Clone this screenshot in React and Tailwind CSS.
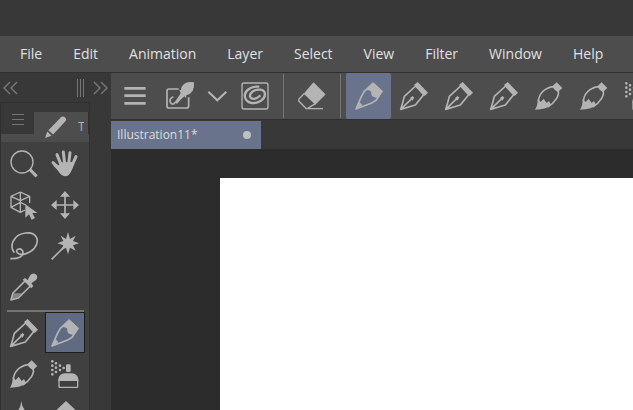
import clsx from 'clsx';

const MENUS = ['File', 'Edit', 'Animation', 'Layer', 'Select', 'View', 'Filter', 'Window', 'Help'];

// every tool glyph is drawn on the same 84 unit grid
const Glyph = ({ className = 'size-7', children }) => (
  <svg
    viewBox="0 0 84 84"
    className={clsx('shrink-0 overflow-visible', className)}
    fill="none"
    stroke="currentColor"
    strokeWidth="5"
    strokeLinejoin="round"
    aria-hidden="true"
  >
    {children}
  </svg>
);

const MenuIcon = () => (
  <Glyph>
    <path d="M10 19h64M10 41h64M10 64h64" strokeWidth="8" />
  </Glyph>
);

const CustomBrushIcon = () => (
  <Glyph>
    <path d="M38 21H9q-6 0-6 6v44q0 7 6 7h52q7 0 7-7V46" />
    <path d="M22 44Q11 48 12 58Q15 69 24 65Q30 60 35 52L48 36" strokeWidth="5" />
    <path
      d="M84 1Q58-3 48 13Q44 20 45 24L40 24L44 33Q36 48 28 61L33 66Q42 54 55 43L60 48L61 40Q87 34 84 1z"
      fill="currentColor"
      stroke="none"
    />
  </Glyph>
);

const ChevronIcon = () => (
  <Glyph>
    <path d="M16 29l27 26l27-26" strokeWidth="6" strokeLinejoin="miter" />
  </Glyph>
);

const ClipIcon = () => (
  <Glyph>
    <rect x="3" y="3" width="78" height="78" rx="6" strokeWidth="4" />
    <path
      d="M52 14C26 12 8 30 12 46C18 68 44 66 60 56C77 44 75 25 58 23C40 21 25 33 27 44C31 54 46 52 56 42"
      strokeWidth="7"
      strokeLinecap="round"
    />
  </Glyph>
);

const EraserIcon = () => (
  <Glyph>
    <path d="M17 35L45 2q2-1 4 1l32 32q2 2 0 4L52 68z" fill="currentColor" stroke="none" />
    <path d="M19 34L3 51q-2 3 0 7l22 22h50M28 80L52 65" strokeWidth="4" />
  </Glyph>
);

const MappingPenIcon = () => (
  <Glyph>
    <path d="M3 81L19 44L28 28L54 4L80 28L64 54L52 62z" />
    <path
      d="M54 1L84 28L72 45Q66 49 56 45Q47 41 49 30Q46 24 34 24Z"
      fill="currentColor"
      stroke="none"
    />
    <path d="M2 83L22 70L14 60z" fill="currentColor" stroke="none" />
  </Glyph>
);

const NibPenIcon = () => (
  <Glyph>
    <path d="M2 82Q8 64 13 43L47 12L71 38L46 69Q22 76 2 82zL36 49" />
    <path d="M30 48L38 42L43 47L37 56z" fill="currentColor" stroke="none" />
    <path d="M42 9L53 0L84 32L74 42z" fill="currentColor" stroke="none" />
  </Glyph>
);

const BrushIcon = () => (
  <Glyph>
    <path d="M10 58Q12 35 30 23Q44 14 56 14L68 25Q74 34 65 49Q55 65 38 75" />
    <path d="M8 50Q9 68 0 83Q34 83 48 69L42 57L35 63L26 50L17 60z" fill="currentColor" stroke="none" />
    <path d="M52 13L65 1L82 18L69 30Q58 26 52 13z" fill="currentColor" stroke="none" />
  </Glyph>
);

const AirbrushIcon = () => (
  <Glyph>
    <path
      d="M4 4v.1M4 17v.1M4 30v.1M4 43v.1M15 10v.1M15 23v.1M15 36v.1M27 17v.1M27 30v.1M38 24v.1"
      strokeWidth="8"
      strokeLinecap="round"
    />
    <rect x="45" y="13" width="14" height="23" rx="4" fill="currentColor" stroke="none" />
    <path d="M22 63V58Q24 41 42 40H62Q80 41 82 58V63z" fill="currentColor" stroke="none" />
    <path d="M24 60v20q0 2 2 2h52q2 0 2-2V60" strokeWidth="4" />
  </Glyph>
);

const ZoomIcon = () => (
  <Glyph>
    <circle cx="36" cy="36" r="33" strokeWidth="4" />
    <path d="M60 59l20 20" strokeWidth="9" />
  </Glyph>
);

const HandIcon = () => (
  <Glyph>
    <path d="M24 54L6 38M30 44L18 14M41 42L37 6M53 43L57 8M62 49L75 20" strokeWidth="9" strokeLinecap="round" />
    <path d="M18 44Q28 49 25 37L63 36L69 40Q64 64 53 75Q42 83 29 73Q20 60 6 46z" fill="currentColor" stroke="none" />
  </Glyph>
);

const ObjectIcon = () => (
  <Glyph>
    <path d="M31 3L3 16v33l28 15l14-7M31 3l28 13v20M3 16l28 13l28-13M31 3v61M3 49l28-15l16 8" strokeWidth="4" />
    <path d="M46 40v40l11-10l8 16l10-5l-8-15h15z" fill="currentColor" stroke="none" />
  </Glyph>
);

const MoveIcon = () => (
  <Glyph>
    <path d="M42 10v64M10 42h64" />
    <path
      d="M42 0L57 17H27zM42 84L57 67H27zM0 42L17 27V57zM84 42L67 27V57z"
      fill="currentColor"
      stroke="none"
    />
  </Glyph>
);

const LassoIcon = () => (
  <Glyph>
    <path d="M13 62C-3 43 10 7 47 3C80-1 91 25 73 49C60 65 31 73 22 62C14 52 31 46 38 57C44 75 21 81 1 80" />
  </Glyph>
);

const WandIcon = () => (
  <Glyph>
    <path d="M2 82L42 42" />
    <path
      d="M51 0L57 21L74 11L66 27L84 34L66 40L74 56L57 47L51 67L45 47L29 56L37 40L19 34L37 27L29 11L45 21z"
      fill="currentColor"
      stroke="none"
    />
  </Glyph>
);

const EyedropperIcon = () => (
  <Glyph>
    <path d="M45 24L9 60L3 81L25 75L61 39" />
    <path d="M12 61h24L23 74L3 81z" fill="currentColor" stroke="none" opacity="0.6" />
    <path
      d="M38 20L45 15L53 21L61 6Q70-3 79 5Q85 12 78 21L64 31L70 39L64 46z"
      fill="currentColor"
      stroke="none"
    />
  </Glyph>
);

const PencilIcon = () => (
  <Glyph className="size-[22px]">
    <path d="M13 54L61 5q6-7 15 0q8 8 2 15L31 71z" fill="currentColor" stroke="none" />
    <path d="M9 59L25 75L0 84z" fill="currentColor" stroke="none" />
  </Glyph>
);

const SparkleIcon = () => (
  <Glyph>
    <path d="M34 0Q37 36 73 42Q37 46 34 83Q31 46 1 42Q31 36 34 0z" fill="currentColor" stroke="none" />
  </Glyph>
);

const BlendIcon = () => (
  <Glyph>
    <path d="M45 0L78 31L45 70L12 31z" fill="currentColor" stroke="none" />
  </Glyph>
);

const BRUSHES = [
  { name: 'Mapping pen', Icon: MappingPenIcon, active: true },
  { name: 'G-pen', Icon: NibPenIcon },
  { name: 'Real G-pen', Icon: NibPenIcon },
  { name: 'Turnip pen', Icon: NibPenIcon },
  { name: 'Textured brush', Icon: BrushIcon },
  { name: 'Ink brush', Icon: BrushIcon },
  { name: 'Soft airbrush', Icon: AirbrushIcon },
];

const BASIC_TOOLS = [
  { name: 'Zoom', Icon: ZoomIcon },
  { name: 'Hand', Icon: HandIcon },
  { name: 'Object', Icon: ObjectIcon },
  { name: 'Move layer', Icon: MoveIcon },
  { name: 'Lasso', Icon: LassoIcon },
  { name: 'Auto select', Icon: WandIcon },
  { name: 'Eyedropper', Icon: EyedropperIcon },
];

const DRAWING_TOOLS = [
  { name: 'Pen', Icon: NibPenIcon },
  { name: 'Pencil', Icon: MappingPenIcon, active: true },
  { name: 'Brush', Icon: BrushIcon },
  { name: 'Airbrush', Icon: AirbrushIcon },
  { name: 'Decoration', Icon: SparkleIcon },
  { name: 'Blend', Icon: BlendIcon },
];

const BarButton = ({ label, active, className = 'w-[45px]', children }) => (
  <button
    type="button"
    aria-label={label}
    aria-pressed={active}
    className={clsx(
      'flex h-[46px] shrink-0 items-center justify-center rounded-xs',
      active && 'bg-[#69748c]',
      className,
    )}
  >
    {children}
  </button>
);

const BarDivider = () => <div className="mr-[5px] ml-1.5 h-11 w-px shrink-0 bg-[#757575]" />;

const ToolGrid = ({ tools }) => (
  <div className="grid auto-rows-[41px] grid-cols-[41px_41px]">
    {tools.map(({ name, Icon, active }) => (
      <button
        key={name}
        type="button"
        aria-label={name}
        aria-pressed={active}
        className={clsx(
          'flex items-center justify-center',
          active && 'ml-px border border-[#1d1d1d] bg-[#606b82]',
        )}
      >
        <Icon />
      </button>
    ))}
  </div>
);

const ToolDock = () => (
  <aside className="flex w-[111px] shrink-0 flex-col border-t border-[#303030] bg-[#383838]">
    <div className="flex h-[29px] shrink-0 items-center text-[#757575]">
      <button type="button" aria-label="Collapse left" className="ml-[3px] h-4 w-4">
        <svg viewBox="0 0 16 16" fill="none" stroke="currentColor" strokeWidth="1.5">
          <path d="M7 2L1 8l6 6M14 2L8 8l6 6" />
        </svg>
      </button>
      <div className="ml-auto flex gap-0.5">
        <span className="h-[18px] w-px bg-current" />
        <span className="h-[18px] w-px bg-current" />
        <span className="h-[18px] w-px bg-current" />
      </div>
      <button type="button" aria-label="Collapse right" className="mr-[3px] ml-2 h-4 w-4">
        <svg viewBox="0 0 16 16" fill="none" stroke="currentColor" strokeWidth="1.5">
          <path d="M2 2l6 6l-6 6M9 2l6 6l-6 6" />
        </svg>
      </button>
    </div>

    <div className="mr-[21px] flex-1 border border-b-0 border-[#303030] bg-[#404040]">
      <div className="flex h-[31px] items-end bg-[#383838]">
        <button type="button" aria-label="Palette menu" className="flex h-[30px] w-[33px] items-center justify-center">
          <svg viewBox="0 0 12 12" className="size-3 text-[#757575]" stroke="currentColor">
            <path d="M0 1.5h12M0 6.5h12M0 11.5h12" />
          </svg>
        </button>
        <button
          type="button"
          className="flex h-[22px] flex-1 items-center gap-[11px] border-r border-[#303030] bg-[#4d4d4d] pt-2 pl-[11px] text-xs text-[#b4b4b4]"
        >
          <PencilIcon />
          <span className="w-1.5 overflow-hidden">T</span>
        </button>
      </div>
      <div className="h-2 bg-[#4d4d4d]" />
      <div className="h-[268px] overflow-hidden pt-px pl-0.5">
        <ToolGrid tools={BASIC_TOOLS} />
        <div className="mt-[3px] ml-1 h-0.5 w-[77px] bg-[#757575]" />
        <ToolGrid tools={DRAWING_TOOLS} />
      </div>
    </div>
  </aside>
);

const App = () => (
  <div className="flex h-screen flex-col overflow-hidden bg-[#383838] font-['Open_Sans',sans-serif] text-[#b4b4b4]">
    <header className="h-9 shrink-0" />

    <nav className="flex h-9 shrink-0 items-center gap-[31px] bg-[#4d4d4d] pl-5 text-sm text-[#e0e0e0]">
      {MENUS.map((menu) => (
        <button key={menu} type="button">
          {menu}
        </button>
      ))}
    </nav>

    <div className="flex min-h-0 flex-1">
      <ToolDock />

      <main className="flex min-w-0 flex-1 flex-col">
        <div className="flex h-12 shrink-0 items-center overflow-hidden border-y border-[#303030] bg-[#4d4d4d] pl-px">
          <BarButton label="Command bar menu">
            <MenuIcon />
          </BarButton>
          <BarButton label="Custom brush">
            <CustomBrushIcon />
          </BarButton>
          <BarButton label="More brushes" className="w-[30px]">
            <ChevronIcon />
          </BarButton>
          <BarButton label="Clip Studio">
            <ClipIcon />
          </BarButton>
          <BarDivider />
          <BarButton label="Eraser">
            <EraserIcon />
          </BarButton>
          <BarDivider />
          {BRUSHES.map(({ name, Icon, active }) => (
            <BarButton key={name} label={name} active={active}>
              <Icon />
            </BarButton>
          ))}
        </div>

        <div className="flex h-[29px] shrink-0 pt-px">
          <button
            type="button"
            className="flex w-[150px] items-center justify-between bg-[#69748c] pr-2.5 pl-1.5 text-xs text-[#dcdcdc]"
          >
            Illustration11*
            <span className="size-2 rounded-full bg-[#c0c0c0]" />
          </button>
        </div>

        <div className="flex flex-1 bg-[#2c2c2c] pt-[29px] pl-[109px]">
          <div className="flex-1 bg-white" />
        </div>
      </main>
    </div>
  </div>
);

export default App;
